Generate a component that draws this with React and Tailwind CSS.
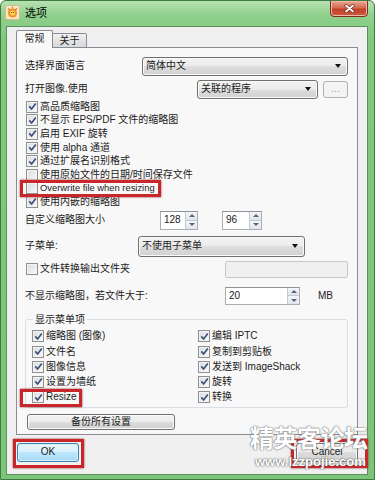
import React from 'react';

const FONT = "font-['Liberation_Sans','Noto_Sans_CJK_SC',sans-serif]";

const options = [
  ['高品质缩略图', true],
  ['不显示 EPS/PDF 文件的缩略图', true],
  ['启用 EXIF 旋转', true],
  ['使用 alpha 通道', true],
  ['通过扩展名识别格式', true],
  ['使用原始文件的日期/时间保存文件', false],
  ['Overwrite file when resizing', false],
  ['使用内嵌的缩略图', true],
];

const menuItems = [
  ['缩略图 (图像)', true],
  ['编辑 IPTC', true],
  ['文件名', true],
  ['复制到剪贴板', true],
  ['图像信息', true],
  ['发送到 ImageShack', true],
  ['设置为墙纸', true],
  ['旋转', true],
  ['Resize', true],
  ['转换', true],
];

const Box = ({ checked }) => (
  <span className="w-[12px] h-[12px] shrink-0 border border-[#8e8f8f] bg-[linear-gradient(135deg,#d9dadb,#fbfbfb)] shadow-[inset_0_0_0_1px_#f4f4f4] flex items-center justify-center">
    {checked && (
      <svg width="9" height="9" viewBox="0 0 9 9">
        <path d="M1.3 4.4 L3.6 7 L7.8 1.4" fill="none" stroke="#3b4f7c" strokeWidth="1.7" />
      </svg>
    )}
  </span>
);

const Check = ({ label, checked, className = '' }) => (
  <div className={`flex items-center gap-[2px] ${className}`}>
    <Box checked={checked} />
    <span className="whitespace-nowrap">{label}</span>
  </div>
);

const Arrow = () => (
  <span className="w-0 h-0 border-x-[3px] border-x-transparent border-t-[4px] border-t-[#111]" />
);

const Combo = ({ text, className = '' }) => (
  <div
    className={`flex items-center justify-between rounded-[3px] border border-[#707070] bg-[linear-gradient(#f3f3f3,#ebebeb_50%,#dddddd_50%,#d2d2d2)] shadow-[inset_0_0_0_1px_#fafafa] pl-[3px] pr-[6px] ${className}`}
  >
    <span>{text}</span>
    <Arrow />
  </div>
);

const Spin = ({ value, className = '' }) => (
  <div className={`flex border border-[#abadb3] border-t-[#8e9197] bg-white ${className}`}>
    <span className="flex-1 flex items-center pl-[3px]">{value}</span>
    <div className="w-[12px] flex flex-col border-l border-[#c3c9d0]">
      <span className="flex-1 flex items-center justify-center border-b border-[#c3c9d0] bg-[linear-gradient(#f5f7fa,#dfe5ec)]">
        <span className="w-0 h-0 border-x-[3px] border-x-transparent border-b-[3px] border-b-[#56657a]" />
      </span>
      <span className="flex-1 flex items-center justify-center bg-[linear-gradient(#f5f7fa,#dfe5ec)]">
        <span className="w-0 h-0 border-x-[3px] border-x-transparent border-t-[3px] border-t-[#56657a]" />
      </span>
    </div>
  </div>
);

const Button = ({ children, className = '' }) => (
  <button
    className={`flex items-center justify-center rounded-[3px] border border-[#707070] bg-[linear-gradient(#f3f3f3,#ebebeb_50%,#dddddd_50%,#cfcfcf)] shadow-[inset_0_0_0_1px_#fbfbfb] ${className}`}
  >
    {children}
  </button>
);

const Mark = ({ className }) => (
  <div className={`absolute border-[3px] border-[#c9262c] shadow-[0_0_2px_#8a3a3a] ${className}`} />
);

export default function App() {
  return (
    <div
      className={`relative w-[375px] h-[480px] overflow-hidden flex flex-col rounded-t-[6px] border border-[#3f7b3f] bg-[linear-gradient(#b7e2b2,#8fd08c_14px,#80c87e_40px,#7bc479)] text-[10px] leading-[12px] text-[#1b1b1b] ${FONT}`}
    >
      {/* title bar */}
      <div className="h-[25px] flex items-start shrink-0">
        <svg className="ml-[4px] mt-[4px]" width="15" height="15" viewBox="0 0 15 15">
          <rect x="0.5" y="0.5" width="14" height="14" rx="2" fill="#f7e7c8" stroke="#d9b98a" />
          <circle cx="7.5" cy="8" r="4.6" fill="#f0922a" />
          <circle cx="7.5" cy="8" r="2.6" fill="#fbd34a" />
          <path d="M3 3.5 L5 5.2 M12 3.5 L10 5.2 M7.5 1.8 L7.5 3.4" stroke="#e2761e" strokeWidth="1.2" />
          <circle cx="6.5" cy="7.5" r="0.6" fill="#6b3b10" />
          <circle cx="8.6" cy="7.5" r="0.6" fill="#6b3b10" />
        </svg>
        <span className="ml-[5px] mt-[6px] text-[11px] leading-[13px] text-black">选项</span>
        <div className="ml-auto mr-[6px] -mt-px w-[38px] h-[17px] rounded-b-[4px] border border-[#7d2c22] bg-[linear-gradient(#e9a894,#d56a52_45%,#c2402a_55%,#cf5a3e)] shadow-[inset_0_0_0_1px_#f0b8a8] flex items-center justify-center">
          <svg width="11" height="9" viewBox="0 0 11 9">
            <path d="M2 1.5 L9 7.5 M9 1.5 L2 7.5" stroke="#6d2a20" strokeWidth="3.2" strokeLinecap="round" />
            <path d="M2 1.5 L9 7.5 M9 1.5 L2 7.5" stroke="#ffffff" strokeWidth="1.8" strokeLinecap="round" />
          </svg>
        </div>
      </div>

      {/* client area */}
      <div className="flex-1 ml-[5px] mr-[6px] mb-[4px] border border-[#5f8f5f] bg-[#f0f0f0] flex flex-col">
        {/* tabs */}
        <div className="flex items-end pl-[9px] pt-[3px] -mb-px relative z-10">
          <div className="h-[18px] w-[37px] border border-b-0 border-[#898c95] bg-[#f8f8f8] rounded-t-[2px] flex items-start justify-center pt-[2px]">
            常规
          </div>
          <div className="h-[15px] w-[34px] border border-l-0 border-[#898c95] bg-[linear-gradient(#f2f2f2,#e3e3e3_50%,#d9d9d9)] rounded-tr-[2px] flex items-center justify-center">
            关于
          </div>
        </div>

        {/* tab page */}
        <div className="ml-[9px] mr-[9px] border border-[#898c95] bg-[#f8f8f8] pt-[8px] pb-[4px] pl-[8px] pr-[9px] flex flex-col">
          <div className="h-[20px] flex items-center">
            <span>选择界面语言</span>
            <Combo text="简体中文" className="ml-auto w-[206px] h-[19px]" />
          </div>

          <div className="h-[20px] mt-[3px] flex items-center">
            <span>打开图像.使用</span>
            <Combo text="关联的程序" className="ml-auto w-[121px] h-[19px]" />
            <div className="ml-[5px] w-[25px] h-[17px] rounded-[3px] border border-[#adb2b5] bg-[#f4f4f4] text-[#9a9a9a] flex items-center justify-center">
              ...
            </div>
          </div>

          <div className="mt-[1px] flex flex-col pl-[1px]">
            {options.map(([label, checked]) => (
              <Check
                key={label}
                label={label}
                checked={checked}
                className={`h-[13.6px] ${label.startsWith('Overwrite') ? 'text-[9.4px]' : ''}`}
              />
            ))}
          </div>

          <div className="h-[19px] mt-[2px] flex items-center">
            <span className="w-[135px]">自定义缩略图大小</span>
            <Spin value="128" className="w-[38px] h-full" />
            <Spin value="96" className="ml-[24px] w-[40px] h-full" />
          </div>

          <div className="h-[21px] mt-[6px] flex items-center">
            <span className="w-[113px]">子菜单:</span>
            <Combo text="不使用子菜单" className="w-[167px] h-[21px]" />
          </div>

          <div className="h-[17px] mt-[4px] flex items-center">
            <Check label="文件转换输出文件夹" checked={false} className="pl-[1px]" />
            <div className="ml-auto w-[123px] h-[17px] rounded-[2px] border border-[#c5c9cf] bg-[#f0f0f0]" />
          </div>

          <div className="h-[18px] mt-[9px] flex items-center">
            <span className="w-[200px]">不显示缩略图，若文件大于:</span>
            <Spin value="20" className="w-[75px] h-full" />
            <span className="ml-[18px]">MB</span>
          </div>

          <fieldset className="mt-[9px] rounded-[3px] border border-[#d5dfe5] pl-[6px] pt-[3px] pb-[2px]">
            <legend className="ml-[1px] px-[2px]">显示菜单项</legend>
            <div className="grid grid-cols-[166px_1fr]">
              {menuItems.map(([label, checked]) => (
                <Check key={label} label={label} checked={checked} className="h-[15.2px]" />
              ))}
            </div>
          </fieldset>

          <Button className="mt-[6px] ml-[2px] w-[148px] h-[16px]">备份所有设置</Button>
        </div>

        {/* bottom buttons */}
        <div className="mt-[8px] flex justify-between pl-[10px] pr-[9px]">
          <button className="w-[62px] h-[19px] rounded-[3px] border border-[#3c7fb1] bg-[linear-gradient(#eaf6fd,#d9f0fc_50%,#bee6fd_50%,#a7d9f5)] shadow-[inset_0_0_0_1px_#d8f0fb] flex items-center justify-center">
            OK
          </button>
          <Button className="w-[62px] h-[19px]">Cancel</Button>
        </div>
      </div>

      {/* highlight boxes */}
      <Mark className="left-[19px] top-[179px] w-[141px] h-[17px]" />
      <Mark className="left-[19px] top-[388px] w-[62px] h-[18px]" />
      <Mark className="left-[12px] top-[438px] w-[71px] h-[29px]" />
      <Mark className="left-[290px] top-[438px] w-[77px] h-[29px]" />

      {/* watermark */}
      <div className="absolute left-[249px] top-[424px] text-white font-bold text-[24px] leading-[28px] tracking-[-0.5px] [text-shadow:0_0_2px_#777,0_0_1px_#555]">
        精英客论坛
      </div>
      <div className="absolute left-[254px] top-[453px] text-white font-bold text-[13px] leading-[15px] [text-shadow:0_0_2px_#666,0_0_1px_#444]">
        www.lzzpojie.com
      </div>
    </div>
  );
}
